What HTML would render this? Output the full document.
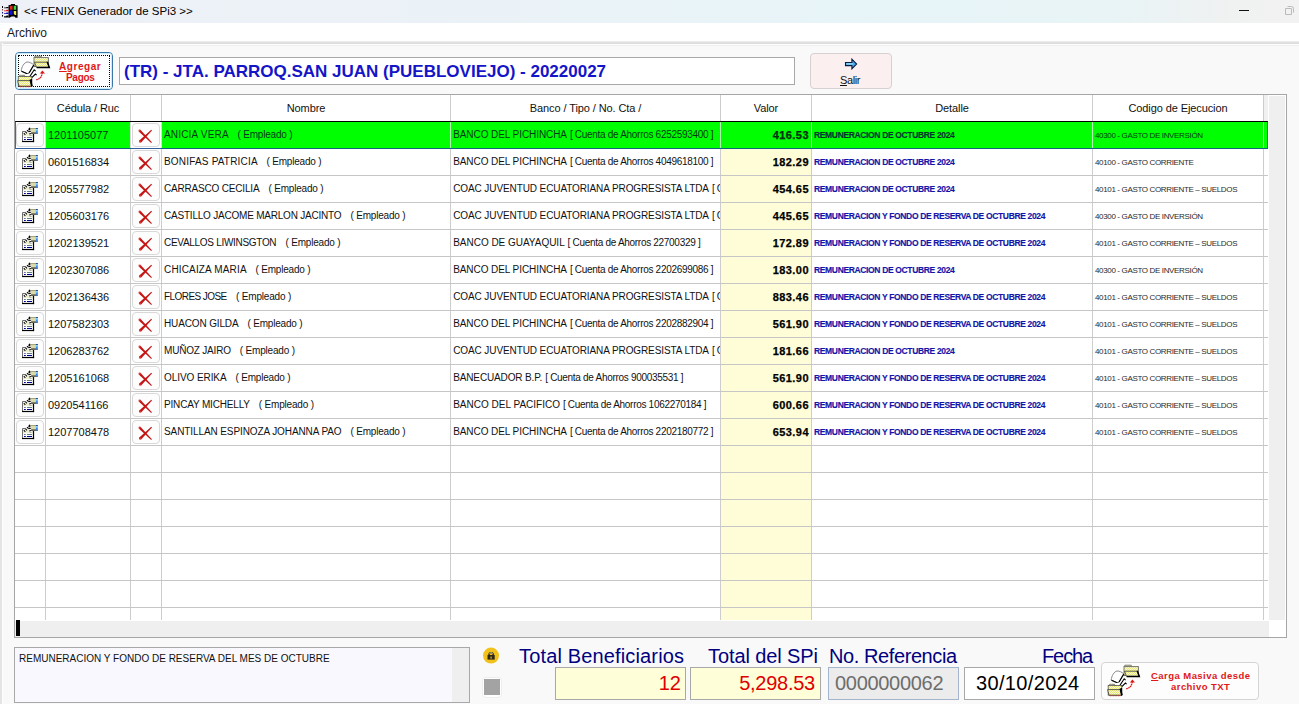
<!DOCTYPE html>
<html><head><meta charset="utf-8">
<style>
*{margin:0;padding:0;box-sizing:border-box}
html,body{width:1299px;height:704px;overflow:hidden;background:#f9f9f9;font-family:"Liberation Sans",sans-serif;color:#000;position:relative}
.a{position:absolute}
.t{white-space:nowrap}
#title{left:0;top:0;width:1299px;height:23px;background:linear-gradient(90deg,#eef1f7 0%,#ebf2f7 35%,#e7f4f8 65%,#e8f4f6 85%,#f0f1f1 95%,#f2f2f2 100%)}
#ttext{left:24px;top:4px;font-size:11.5px;line-height:14px;color:#000}
#menu{left:0;top:23px;width:1299px;height:18px;background:#fff}
#archivo{left:7px;top:26px;font-size:12px;line-height:14px;color:#1a1a1a}
#band{left:0;top:41px;width:1299px;height:3px;background:linear-gradient(180deg,#f0f0f0 0,#e8e8e8 1px,#dcdcdc 2px,#dcdcdc 3px)}
#wl{left:0;top:43px;width:2px;height:661px;background:#e4e4e4;box-shadow:1px 0 0 #fdfdfd}
#wl2{left:2px;top:44px;width:1297px;height:1px;background:#fdfdfd;box-shadow:0 1px 0 #f0f0f0}
#btnAdd{left:15px;top:52px;width:98px;height:38px;border:1.5px solid #3a76ab;border-radius:4px;background:#fcfeff}
#btnAddIn{position:absolute;left:0;top:0;right:0;bottom:0;border:1px solid #c8eefc;border-radius:3px}
#btnAddIn:after{content:"";position:absolute;left:1px;top:1px;right:1px;bottom:1px;border:1px dotted #000}
#addT1{left:59px;top:62px;font-size:10px;font-weight:bold;letter-spacing:0.55px;color:#e01818;line-height:10px}
#addT2{left:66px;top:73px;font-size:10px;font-weight:bold;letter-spacing:-0.3px;color:#e01818;line-height:10px}
#tbox{left:119px;top:57px;width:676px;height:28px;border:1px solid #a8a8a8;background:#fff}
#ttitle{left:124px;top:62px;font-size:17px;font-weight:bold;color:#1414c8;line-height:20px}
#btnSalir{left:810px;top:53px;width:82px;height:36px;border:1px solid #d6d0d0;border-radius:4px;background:#fcefef}
#salirT{left:840px;top:74px;font-size:11px;letter-spacing:-0.4px;line-height:13px;color:#111}
#gframe{left:14px;top:94px;width:1273px;height:544px;border:1px solid #a6a6a6;background:#fff}
#gwhite{left:15px;top:95px;width:1248px;height:525px;background:#fff}
#yel{left:721px;top:149px;width:90px;height:471px;background:#fefdd8}
.hd{top:101px;font-size:11px;letter-spacing:-0.1px;line-height:14px;text-align:center;color:#111}
#hfill{left:1264px;top:95px;width:4px;height:26px;background:#f0f0f0}
#vsb{left:1269px;top:96px;width:16px;height:524px;background:#efefef}
#hsb{left:15px;top:621px;width:1254px;height:16px;background:#efefef}
#hthumb{left:16px;top:620px;width:4px;height:16px;background:#000}
#corner{left:1269px;top:620px;width:17px;height:17px;background:#fff}
.vl{top:95px;width:1px;height:525px;background:#cdcdcd}
.hl{left:15px;width:1253px;height:1px;background:#c6c6c6}
#hdrline{left:15px;top:121px;width:1253px;height:1px;background:#000}
#selrow{left:15px;width:1253px;height:28px;border:1px solid rgba(16,72,150,0.82);border-top:1px solid #000;border-right-color:rgba(0,110,50,0.7)}
.eb{left:16px;width:28px;height:24px;border:1px solid #d8d8d8;border-radius:4px;background:#fdfdfd}
.db{left:132px;width:28px;height:24px;border:1px solid #d8d8d8;border-radius:4px;background:#fdfdfd}
.c1{left:48px;font-size:11px;line-height:13px;color:#111}
.c2{left:164px;font-size:10px;letter-spacing:0.2px;line-height:13px;color:#111}
.emp{font-size:10px;letter-spacing:-0.18px!important}
.c3{font-size:10px;line-height:13px;color:#111}
.c3clip{left:451px;width:269px;height:14px;overflow:hidden}
.c4{left:721px;width:88px;text-align:right;font-size:11px;font-weight:bold;letter-spacing:0.45px;line-height:13px;color:#000;-webkit-text-stroke:0.25px #000}
.c5{left:814px;font-size:8.5px;font-weight:bold;letter-spacing:-0.35px;line-height:11px;color:#1414a8;-webkit-text-stroke:0.15px #1414a8}
.c6{left:1095px;font-size:8px;letter-spacing:-0.35px;line-height:11px;color:#2a2a2a}
#desc{left:14px;top:647px;width:456px;height:56px;border:1px solid #a8a8a8;background:#f8f8fe}
#descsb{left:452px;top:648px;width:17px;height:54px;background:#efefef}
#descT{left:19px;top:652px;font-size:10px;line-height:13px;color:#111}
#chkO{left:482px;top:677px;width:20px;height:21px;border-radius:4px;background:#fff;border:1px solid #eeeeee}
#chk{left:484px;top:679px;width:16px;height:16px;background:#a3a3a3}
.lbl{top:645px;font-size:20px;line-height:23px;color:#000080}
.fy{top:667px;width:131px;height:33px;border:1px solid #a8a8a8;background:#fefed9}
.fv{top:670px;font-size:20px;line-height:26px;color:#000}
.red{color:#e00000}
.fref{left:828px;top:667px;width:131px;height:33px;border:1px solid #a4b4cc;background:#ececec}
.ffe{left:964px;top:667px;width:131px;height:33px;border:1px solid #a8a8a8;background:#fff}
#btnCarga{left:1101px;top:662px;width:158px;height:38px;border:1px solid #d4d4d4;border-radius:4px;background:#fdfdfd}
#cT1{left:1151px;top:671px;font-size:9.5px;font-weight:bold;letter-spacing:0.45px;color:#e01818;line-height:10px}
#cT2{left:1171px;top:682px;font-size:9.5px;font-weight:bold;letter-spacing:0.45px;color:#e01818;line-height:10px}

.br{font-size:10px;letter-spacing:-0.3px}

</style></head><body>

<div class="a" id="title"></div>
<svg class="a" style="left:0;top:2px" width="22" height="18" viewBox="0 0 22 18"><path d="M8.5 3.2L11 2.8V2h4v1L17.6 3.4V15.8H15.5L14.5 14.6H11.5L9.5 15.8H8.5z" fill="#000"/><rect x="9.8" y="3.8" width="2.8" height="3.9" fill="#e02828"/><rect x="13.7" y="3.8" width="2.5" height="4" fill="#30e040"/><rect x="9.6" y="8.5" width="2.9" height="4.3" fill="#1010e0"/><path d="M13.8 9h2.4v4h-1.4l-1-1.5z" fill="#f0f040"/><rect x="2" y="4" width="1" height="2" fill="#000"/><rect x="2" y="7" width="1" height="1.5" fill="#804040"/><rect x="2" y="10" width="1" height="1.5" fill="#101090"/><rect x="2" y="13" width="1" height="1.6" fill="#000"/><path d="M4 5.5H6l0.6-0.6H8.5V6.3H4z" fill="#000"/><path d="M4 8.4H6l0.6-0.6H8.5V9.2H4z" fill="#e01010"/><path d="M4 11.2H6l0.6-0.6H8.5V12H4z" fill="#1010c0"/><path d="M4 14.2H6l0.6-0.6H8.5V15.6H4z" fill="#000"/></svg>

<div class="a t" id="ttext">&lt;&lt; FENIX Generador de SPi3 &gt;&gt;</div>
<div class="a" style="left:1239px;top:10px;width:10px;height:1px;background:#111"></div>
<svg class="a" style="left:1283px;top:4px" width="12" height="12" viewBox="0 0 12 12"><path d="M2.5 4.5h6v6h-6z" fill="none" stroke="#bbb" stroke-width="1"/><path d="M4.5 2.5h4a2 2 0 0 1 2 2v4" fill="none" stroke="#bbb" stroke-width="1"/></svg>
<div class="a" id="menu"></div>
<div class="a t" id="archivo">Archivo</div>
<div class="a" id="band"></div>
<div class="a" id="wl"></div>
<div class="a" id="wl2"></div>
<div class="a" id="btnAdd"><div id="btnAddIn"></div></div>
<svg class="a" style="left:17px;top:55px" width="34" height="34" viewBox="0 0 34 34"><defs><pattern id="chk" width="2" height="2" patternUnits="userSpaceOnUse"><rect width="2" height="2" fill="#e6e67a"/><rect width="1" height="1" fill="#fafad0"/><rect x="1" y="1" width="1" height="1" fill="#fafad0"/></pattern></defs>
<path d="M17.8 3V1.2h6.5V3" fill="#e8e8a0" stroke="#777" stroke-width="0.9"/>
<rect x="17" y="2.6" width="14.4" height="9" fill="url(#chk)" stroke="#6a6a6a" stroke-width="0.9"/>
<path d="M17.5 7.2H30.3L32.1 12.4H19.5z" fill="url(#chk)" stroke="#333" stroke-width="0.8"/>
<path d="M30.3 6.8L32.3 12.6H19.8" fill="none" stroke="#000" stroke-width="1.5"/>
<path d="M4.2 16C4.6 12 7 7.6 10 7C12.5 6.8 14.8 8.3 16.8 9.8L11.3 19.3z" fill="#fff" stroke="#8a8a8a" stroke-width="1"/>
<path d="M4.5 16.2L11.3 19.3L16.8 10" fill="none" stroke="#000" stroke-width="1.2"/>
<path d="M5.4 20.6L11.8 23.1L17.2 14.8L18.6 16.2" fill="#fff" stroke="#000" stroke-width="1.1"/>
<path d="M12.8 24.6L18.4 19L19.6 20.2" fill="none" stroke="#000" stroke-width="1.1"/>
<path d="M2.5 22V20.3h5V22" fill="#e8e8a0" stroke="#777" stroke-width="0.8"/>
<rect x="1.2" y="21.5" width="13.6" height="9.6" fill="url(#chk)" stroke="#555" stroke-width="0.8"/>
<path d="M0.6 25.6H13.2L14.6 31.2H2z" fill="url(#chk)" stroke="#333" stroke-width="0.8"/>
<path d="M13.3 24.5L15 31.3" fill="none" stroke="#000" stroke-width="1.6"/>
<path d="M14.5 24V31.5" fill="none" stroke="#000" stroke-width="1.2"/>
<path d="M3 31.8H14" stroke="#d02020" stroke-width="0.9" stroke-dasharray="0.8 0.8"/>
<path d="M19.2 24.6C22 24.6 24.6 22.5 25.2 18" fill="none" stroke="#e01818" stroke-width="1.3" stroke-dasharray="1.6 0.5"/>
<path d="M22.8 18.6L25.4 15.6L28 18.4z" fill="#e01818"/>
</svg>
<div class="a t" id="addT1"><u>A</u>gregar</div><div class="a t" id="addT2">Pagos</div>
<div class="a" id="tbox"></div>
<div class="a t" id="ttitle">(TR) - JTA. PARROQ.SAN JUAN (PUEBLOVIEJO) - 20220027</div>
<div class="a" id="btnSalir"></div>
<svg class="a" style="left:844px;top:58px" width="14" height="12" viewBox="0 0 14 12"><path d="M1.5 4.5h6.4V1.2L12.6 6 7.9 10.8V7.6H1.5z" fill="#4aa8e8" stroke="#0a1a40" stroke-width="1.1" stroke-linejoin="miter"/><path d="M2.3 5.9h6.5" stroke="#a8ecff" stroke-width="1"/></svg>
<div class="a t" id="salirT"><u>S</u>alir</div>
<div class="a" id="gframe"></div>
<div class="a" id="gwhite"></div>
<div class="a" id="yel"></div>
<div class="a t hd" style="left:46px;width:84px">Cédula / Ruc</div>
<div class="a t hd" style="left:162px;width:288px">Nombre</div>
<div class="a t hd" style="left:451px;width:269px">Banco / Tipo / No. Cta /</div>
<div class="a t hd" style="left:721px;width:90px">Valor</div>
<div class="a t hd" style="left:812px;width:280px">Detalle</div>
<div class="a t hd" style="left:1093px;width:170px">Codigo de Ejecucion</div>
<div class="a" id="hfill"></div>
<div class="a" id="vsb"></div>
<div class="a" id="hsb"></div>
<div class="a" id="hthumb"></div>
<div class="a" id="corner"></div>
<div class="a vl" style="left:45px"></div>
<div class="a vl" style="left:130px"></div>
<div class="a vl" style="left:161px"></div>
<div class="a vl" style="left:450px"></div>
<div class="a vl" style="left:720px"></div>
<div class="a vl" style="left:811px"></div>
<div class="a vl" style="left:1092px"></div>
<div class="a vl" style="left:1263px"></div>
<div class="a hl" style="top:121px"></div>
<div class="a hl" style="top:148px"></div>
<div class="a hl" style="top:175px"></div>
<div class="a hl" style="top:202px"></div>
<div class="a hl" style="top:229px"></div>
<div class="a hl" style="top:256px"></div>
<div class="a hl" style="top:283px"></div>
<div class="a hl" style="top:310px"></div>
<div class="a hl" style="top:337px"></div>
<div class="a hl" style="top:364px"></div>
<div class="a hl" style="top:391px"></div>
<div class="a hl" style="top:418px"></div>
<div class="a hl" style="top:445px"></div>
<div class="a hl" style="top:472px"></div>
<div class="a hl" style="top:499px"></div>
<div class="a hl" style="top:526px"></div>
<div class="a hl" style="top:553px"></div>
<div class="a hl" style="top:580px"></div>
<div class="a hl" style="top:607px"></div>
<div class="a" id="hdrline"></div>
<div class="a" style="left:15px;top:122px;width:1253px;height:26px;background:#fff"></div>
<div class="a" style="left:45px;top:122px;width:86px;height:27px;background:#00ff00"></div>
<div class="a" style="left:161px;top:122px;width:1107px;height:27px;background:#00ff00"></div>
<div class="a" style="left:45px;top:122px;width:1px;height:26px;background:#b4f8b4"></div>
<div class="a" style="left:130px;top:122px;width:1px;height:26px;background:#d8d8d8"></div>
<div class="a" style="left:161px;top:122px;width:1px;height:26px;background:#b4f8b4"></div>
<div class="a" style="left:450px;top:122px;width:1px;height:26px;background:#b4f8b4"></div>
<div class="a" style="left:720px;top:122px;width:1px;height:26px;background:#b4f8b4"></div>
<div class="a" style="left:811px;top:122px;width:1px;height:26px;background:#b4f8b4"></div>
<div class="a" style="left:1092px;top:122px;width:1px;height:26px;background:#b4f8b4"></div>
<div class="a" style="left:1263px;top:122px;width:1px;height:26px;background:#b4f8b4"></div>
<div class="a" id="selrow" style="top:121px"></div>
<div class="a eb" style="top:123px"></div>
<svg class="a" style="left:20px;top:126px" width="18" height="17" viewBox="0 0 18 17"><rect x="2" y="5" width="12" height="11" fill="#fff"/><rect x="2.6" y="5.6" width="10.6" height="4.6" fill="#eeeed0"/><path d="M2.5 15.5V5.5H7" fill="none" stroke="#6e6e6e" stroke-width="1"/><rect x="12.9" y="8" width="1.2" height="8.1" fill="#000"/><rect x="2" y="14.9" width="12.1" height="1.2" fill="#000"/><rect x="4" y="11" width="1.8" height="0.9" fill="#6060a0"/><rect x="7" y="11" width="5" height="0.9" fill="#507070"/><rect x="4" y="13" width="1.8" height="1" fill="#000090"/><rect x="7" y="13" width="5" height="1" fill="#000090"/><rect x="9.5" y="2" width="6.2" height="5" fill="#dcdaa8"/><rect x="9.5" y="2" width="6.2" height="0.8" fill="#9a9870"/><rect x="11" y="6.6" width="6.8" height="1" fill="#000"/><rect x="15.8" y="2" width="2" height="5.4" fill="#3c88e8"/><rect x="15.8" y="2" width="2" height="0.8" fill="#1c3a80"/><rect x="15.8" y="3" width="2" height="1.6" fill="#88d8ff"/><path d="M4.2 8.4L9.3 3.4L10.6 9.4" fill="none" stroke="#fff" stroke-width="2.2"/><path d="M4.2 8.4L9.3 3.4L10.6 9.4" fill="none" stroke="#000" stroke-width="2.2" stroke-dasharray="1.1 1.1"/>
</svg>
<div class="a db" style="top:123px"></div>
<svg class="a" style="left:138px;top:129px" width="15" height="14" viewBox="0 0 15 14"><path d="M0.7 2.6L2.4 0.8L13.9 13.2L13.2 14z" fill="#c41414"/><path d="M14 1.4L13.3 0.7L1 11.8L2.9 13.8z" fill="#c41414"/><circle cx="2" cy="12.6" r="1.1" fill="#e03030"/><circle cx="1.6" cy="1.7" r="1.1" fill="#e03a3a"/></svg>
<div class="a t c1" style="top:129px;color:#003a18">1201105077</div>
<div class="a t c2" style="top:128px;letter-spacing:0.179px;color:#003a18">ANICIA VERA</div>
<div class="a t c2 emp" style="top:128px;left:237.4px;color:#003a18">( Empleado )</div>
<div class="a c3clip" style="top:128px"><div class="a t c3" style="left:2.2px;top:0;letter-spacing:-0.078px;color:#003a18">BANCO DEL PICHINCHA</div><div class="a t c3 br" style="left:118.9px;top:0;color:#003a18">[ Cuenta de Ahorros 6252593400 ]</div></div>
<div class="a t c4" style="top:129px;color:#003a18">416.53</div>
<div class="a t c5" style="top:130px;color:#003a18">REMUNERACION DE OCTUBRE 2024</div>
<div class="a t c6" style="top:130px;color:#003a18">40300 - GASTO DE INVERSIÓN</div>
<div class="a eb" style="top:150px"></div>
<svg class="a" style="left:20px;top:153px" width="18" height="17" viewBox="0 0 18 17"><rect x="2" y="5" width="12" height="11" fill="#fff"/><rect x="2.6" y="5.6" width="10.6" height="4.6" fill="#eeeed0"/><path d="M2.5 15.5V5.5H7" fill="none" stroke="#6e6e6e" stroke-width="1"/><rect x="12.9" y="8" width="1.2" height="8.1" fill="#000"/><rect x="2" y="14.9" width="12.1" height="1.2" fill="#000"/><rect x="4" y="11" width="1.8" height="0.9" fill="#6060a0"/><rect x="7" y="11" width="5" height="0.9" fill="#507070"/><rect x="4" y="13" width="1.8" height="1" fill="#000090"/><rect x="7" y="13" width="5" height="1" fill="#000090"/><rect x="9.5" y="2" width="6.2" height="5" fill="#dcdaa8"/><rect x="9.5" y="2" width="6.2" height="0.8" fill="#9a9870"/><rect x="11" y="6.6" width="6.8" height="1" fill="#000"/><rect x="15.8" y="2" width="2" height="5.4" fill="#3c88e8"/><rect x="15.8" y="2" width="2" height="0.8" fill="#1c3a80"/><rect x="15.8" y="3" width="2" height="1.6" fill="#88d8ff"/><path d="M4.2 8.4L9.3 3.4L10.6 9.4" fill="none" stroke="#fff" stroke-width="2.2"/><path d="M4.2 8.4L9.3 3.4L10.6 9.4" fill="none" stroke="#000" stroke-width="2.2" stroke-dasharray="1.1 1.1"/>
</svg>
<div class="a db" style="top:150px"></div>
<svg class="a" style="left:138px;top:156px" width="15" height="14" viewBox="0 0 15 14"><path d="M0.7 2.6L2.4 0.8L13.9 13.2L13.2 14z" fill="#c41414"/><path d="M14 1.4L13.3 0.7L1 11.8L2.9 13.8z" fill="#c41414"/><circle cx="2" cy="12.6" r="1.1" fill="#e03030"/><circle cx="1.6" cy="1.7" r="1.1" fill="#e03a3a"/></svg>
<div class="a t c1" style="top:156px">0601516834</div>
<div class="a t c2" style="top:155px;letter-spacing:0.189px">BONIFAS PATRICIA</div>
<div class="a t c2 emp" style="top:155px;left:266.4px">( Empleado )</div>
<div class="a c3clip" style="top:155px"><div class="a t c3" style="left:2.2px;top:0;letter-spacing:-0.078px">BANCO DEL PICHINCHA</div><div class="a t c3 br" style="left:118.9px;top:0">[ Cuenta de Ahorros 4049618100 ]</div></div>
<div class="a t c4" style="top:156px">182.29</div>
<div class="a t c5" style="top:157px">REMUNERACION DE OCTUBRE 2024</div>
<div class="a t c6" style="top:157px">40100 - GASTO CORRIENTE</div>
<div class="a eb" style="top:177px"></div>
<svg class="a" style="left:20px;top:180px" width="18" height="17" viewBox="0 0 18 17"><rect x="2" y="5" width="12" height="11" fill="#fff"/><rect x="2.6" y="5.6" width="10.6" height="4.6" fill="#eeeed0"/><path d="M2.5 15.5V5.5H7" fill="none" stroke="#6e6e6e" stroke-width="1"/><rect x="12.9" y="8" width="1.2" height="8.1" fill="#000"/><rect x="2" y="14.9" width="12.1" height="1.2" fill="#000"/><rect x="4" y="11" width="1.8" height="0.9" fill="#6060a0"/><rect x="7" y="11" width="5" height="0.9" fill="#507070"/><rect x="4" y="13" width="1.8" height="1" fill="#000090"/><rect x="7" y="13" width="5" height="1" fill="#000090"/><rect x="9.5" y="2" width="6.2" height="5" fill="#dcdaa8"/><rect x="9.5" y="2" width="6.2" height="0.8" fill="#9a9870"/><rect x="11" y="6.6" width="6.8" height="1" fill="#000"/><rect x="15.8" y="2" width="2" height="5.4" fill="#3c88e8"/><rect x="15.8" y="2" width="2" height="0.8" fill="#1c3a80"/><rect x="15.8" y="3" width="2" height="1.6" fill="#88d8ff"/><path d="M4.2 8.4L9.3 3.4L10.6 9.4" fill="none" stroke="#fff" stroke-width="2.2"/><path d="M4.2 8.4L9.3 3.4L10.6 9.4" fill="none" stroke="#000" stroke-width="2.2" stroke-dasharray="1.1 1.1"/>
</svg>
<div class="a db" style="top:177px"></div>
<svg class="a" style="left:138px;top:183px" width="15" height="14" viewBox="0 0 15 14"><path d="M0.7 2.6L2.4 0.8L13.9 13.2L13.2 14z" fill="#c41414"/><path d="M14 1.4L13.3 0.7L1 11.8L2.9 13.8z" fill="#c41414"/><circle cx="2" cy="12.6" r="1.1" fill="#e03030"/><circle cx="1.6" cy="1.7" r="1.1" fill="#e03a3a"/></svg>
<div class="a t c1" style="top:183px">1205577982</div>
<div class="a t c2" style="top:182px;letter-spacing:-0.184px">CARRASCO CECILIA</div>
<div class="a t c2 emp" style="top:182px;left:268.4px">( Empleado )</div>
<div class="a c3clip" style="top:182px"><div class="a t c3" style="left:2.2px;top:0;letter-spacing:-0.099px">COAC JUVENTUD ECUATORIANA PROGRESISTA LTDA</div><div class="a t c3 br" style="left:260.9px;top:0">[ Cuenta de Ahorros</div></div>
<div class="a t c4" style="top:183px">454.65</div>
<div class="a t c5" style="top:184px">REMUNERACION DE OCTUBRE 2024</div>
<div class="a t c6" style="top:184px">40101 - GASTO CORRIENTE – SUELDOS</div>
<div class="a eb" style="top:204px"></div>
<svg class="a" style="left:20px;top:207px" width="18" height="17" viewBox="0 0 18 17"><rect x="2" y="5" width="12" height="11" fill="#fff"/><rect x="2.6" y="5.6" width="10.6" height="4.6" fill="#eeeed0"/><path d="M2.5 15.5V5.5H7" fill="none" stroke="#6e6e6e" stroke-width="1"/><rect x="12.9" y="8" width="1.2" height="8.1" fill="#000"/><rect x="2" y="14.9" width="12.1" height="1.2" fill="#000"/><rect x="4" y="11" width="1.8" height="0.9" fill="#6060a0"/><rect x="7" y="11" width="5" height="0.9" fill="#507070"/><rect x="4" y="13" width="1.8" height="1" fill="#000090"/><rect x="7" y="13" width="5" height="1" fill="#000090"/><rect x="9.5" y="2" width="6.2" height="5" fill="#dcdaa8"/><rect x="9.5" y="2" width="6.2" height="0.8" fill="#9a9870"/><rect x="11" y="6.6" width="6.8" height="1" fill="#000"/><rect x="15.8" y="2" width="2" height="5.4" fill="#3c88e8"/><rect x="15.8" y="2" width="2" height="0.8" fill="#1c3a80"/><rect x="15.8" y="3" width="2" height="1.6" fill="#88d8ff"/><path d="M4.2 8.4L9.3 3.4L10.6 9.4" fill="none" stroke="#fff" stroke-width="2.2"/><path d="M4.2 8.4L9.3 3.4L10.6 9.4" fill="none" stroke="#000" stroke-width="2.2" stroke-dasharray="1.1 1.1"/>
</svg>
<div class="a db" style="top:204px"></div>
<svg class="a" style="left:138px;top:210px" width="15" height="14" viewBox="0 0 15 14"><path d="M0.7 2.6L2.4 0.8L13.9 13.2L13.2 14z" fill="#c41414"/><path d="M14 1.4L13.3 0.7L1 11.8L2.9 13.8z" fill="#c41414"/><circle cx="2" cy="12.6" r="1.1" fill="#e03030"/><circle cx="1.6" cy="1.7" r="1.1" fill="#e03a3a"/></svg>
<div class="a t c1" style="top:210px">1205603176</div>
<div class="a t c2" style="top:209px;letter-spacing:-0.212px">CASTILLO JACOME MARLON JACINTO</div>
<div class="a t c2 emp" style="top:209px;left:350.4px">( Empleado )</div>
<div class="a c3clip" style="top:209px"><div class="a t c3" style="left:2.2px;top:0;letter-spacing:-0.099px">COAC JUVENTUD ECUATORIANA PROGRESISTA LTDA</div><div class="a t c3 br" style="left:260.9px;top:0">[ Cuenta de Ahorros</div></div>
<div class="a t c4" style="top:210px">445.65</div>
<div class="a t c5" style="top:211px">REMUNERACION Y FONDO DE RESERVA DE OCTUBRE 2024</div>
<div class="a t c6" style="top:211px">40300 - GASTO DE INVERSIÓN</div>
<div class="a eb" style="top:231px"></div>
<svg class="a" style="left:20px;top:234px" width="18" height="17" viewBox="0 0 18 17"><rect x="2" y="5" width="12" height="11" fill="#fff"/><rect x="2.6" y="5.6" width="10.6" height="4.6" fill="#eeeed0"/><path d="M2.5 15.5V5.5H7" fill="none" stroke="#6e6e6e" stroke-width="1"/><rect x="12.9" y="8" width="1.2" height="8.1" fill="#000"/><rect x="2" y="14.9" width="12.1" height="1.2" fill="#000"/><rect x="4" y="11" width="1.8" height="0.9" fill="#6060a0"/><rect x="7" y="11" width="5" height="0.9" fill="#507070"/><rect x="4" y="13" width="1.8" height="1" fill="#000090"/><rect x="7" y="13" width="5" height="1" fill="#000090"/><rect x="9.5" y="2" width="6.2" height="5" fill="#dcdaa8"/><rect x="9.5" y="2" width="6.2" height="0.8" fill="#9a9870"/><rect x="11" y="6.6" width="6.8" height="1" fill="#000"/><rect x="15.8" y="2" width="2" height="5.4" fill="#3c88e8"/><rect x="15.8" y="2" width="2" height="0.8" fill="#1c3a80"/><rect x="15.8" y="3" width="2" height="1.6" fill="#88d8ff"/><path d="M4.2 8.4L9.3 3.4L10.6 9.4" fill="none" stroke="#fff" stroke-width="2.2"/><path d="M4.2 8.4L9.3 3.4L10.6 9.4" fill="none" stroke="#000" stroke-width="2.2" stroke-dasharray="1.1 1.1"/>
</svg>
<div class="a db" style="top:231px"></div>
<svg class="a" style="left:138px;top:237px" width="15" height="14" viewBox="0 0 15 14"><path d="M0.7 2.6L2.4 0.8L13.9 13.2L13.2 14z" fill="#c41414"/><path d="M14 1.4L13.3 0.7L1 11.8L2.9 13.8z" fill="#c41414"/><circle cx="2" cy="12.6" r="1.1" fill="#e03030"/><circle cx="1.6" cy="1.7" r="1.1" fill="#e03a3a"/></svg>
<div class="a t c1" style="top:237px">1202139521</div>
<div class="a t c2" style="top:236px;letter-spacing:-0.3px">CEVALLOS LIWINSGTON</div>
<div class="a t c2 emp" style="top:236px;left:285.4px">( Empleado )</div>
<div class="a c3clip" style="top:236px"><div class="a t c3" style="left:2.2px;top:0;letter-spacing:-0.022px">BANCO DE GUAYAQUIL</div><div class="a t c3 br" style="left:116.6px;top:0">[ Cuenta de Ahorros 22700329 ]</div></div>
<div class="a t c4" style="top:237px">172.89</div>
<div class="a t c5" style="top:238px">REMUNERACION Y FONDO DE RESERVA DE OCTUBRE 2024</div>
<div class="a t c6" style="top:238px">40101 - GASTO CORRIENTE – SUELDOS</div>
<div class="a eb" style="top:258px"></div>
<svg class="a" style="left:20px;top:261px" width="18" height="17" viewBox="0 0 18 17"><rect x="2" y="5" width="12" height="11" fill="#fff"/><rect x="2.6" y="5.6" width="10.6" height="4.6" fill="#eeeed0"/><path d="M2.5 15.5V5.5H7" fill="none" stroke="#6e6e6e" stroke-width="1"/><rect x="12.9" y="8" width="1.2" height="8.1" fill="#000"/><rect x="2" y="14.9" width="12.1" height="1.2" fill="#000"/><rect x="4" y="11" width="1.8" height="0.9" fill="#6060a0"/><rect x="7" y="11" width="5" height="0.9" fill="#507070"/><rect x="4" y="13" width="1.8" height="1" fill="#000090"/><rect x="7" y="13" width="5" height="1" fill="#000090"/><rect x="9.5" y="2" width="6.2" height="5" fill="#dcdaa8"/><rect x="9.5" y="2" width="6.2" height="0.8" fill="#9a9870"/><rect x="11" y="6.6" width="6.8" height="1" fill="#000"/><rect x="15.8" y="2" width="2" height="5.4" fill="#3c88e8"/><rect x="15.8" y="2" width="2" height="0.8" fill="#1c3a80"/><rect x="15.8" y="3" width="2" height="1.6" fill="#88d8ff"/><path d="M4.2 8.4L9.3 3.4L10.6 9.4" fill="none" stroke="#fff" stroke-width="2.2"/><path d="M4.2 8.4L9.3 3.4L10.6 9.4" fill="none" stroke="#000" stroke-width="2.2" stroke-dasharray="1.1 1.1"/>
</svg>
<div class="a db" style="top:258px"></div>
<svg class="a" style="left:138px;top:264px" width="15" height="14" viewBox="0 0 15 14"><path d="M0.7 2.6L2.4 0.8L13.9 13.2L13.2 14z" fill="#c41414"/><path d="M14 1.4L13.3 0.7L1 11.8L2.9 13.8z" fill="#c41414"/><circle cx="2" cy="12.6" r="1.1" fill="#e03030"/><circle cx="1.6" cy="1.7" r="1.1" fill="#e03a3a"/></svg>
<div class="a t c1" style="top:264px">1202307086</div>
<div class="a t c2" style="top:263px;letter-spacing:0.155px">CHICAIZA MARIA</div>
<div class="a t c2 emp" style="top:263px;left:255.4px">( Empleado )</div>
<div class="a c3clip" style="top:263px"><div class="a t c3" style="left:2.2px;top:0;letter-spacing:-0.078px">BANCO DEL PICHINCHA</div><div class="a t c3 br" style="left:118.9px;top:0">[ Cuenta de Ahorros 2202699086 ]</div></div>
<div class="a t c4" style="top:264px">183.00</div>
<div class="a t c5" style="top:265px">REMUNERACION DE OCTUBRE 2024</div>
<div class="a t c6" style="top:265px">40300 - GASTO DE INVERSIÓN</div>
<div class="a eb" style="top:285px"></div>
<svg class="a" style="left:20px;top:288px" width="18" height="17" viewBox="0 0 18 17"><rect x="2" y="5" width="12" height="11" fill="#fff"/><rect x="2.6" y="5.6" width="10.6" height="4.6" fill="#eeeed0"/><path d="M2.5 15.5V5.5H7" fill="none" stroke="#6e6e6e" stroke-width="1"/><rect x="12.9" y="8" width="1.2" height="8.1" fill="#000"/><rect x="2" y="14.9" width="12.1" height="1.2" fill="#000"/><rect x="4" y="11" width="1.8" height="0.9" fill="#6060a0"/><rect x="7" y="11" width="5" height="0.9" fill="#507070"/><rect x="4" y="13" width="1.8" height="1" fill="#000090"/><rect x="7" y="13" width="5" height="1" fill="#000090"/><rect x="9.5" y="2" width="6.2" height="5" fill="#dcdaa8"/><rect x="9.5" y="2" width="6.2" height="0.8" fill="#9a9870"/><rect x="11" y="6.6" width="6.8" height="1" fill="#000"/><rect x="15.8" y="2" width="2" height="5.4" fill="#3c88e8"/><rect x="15.8" y="2" width="2" height="0.8" fill="#1c3a80"/><rect x="15.8" y="3" width="2" height="1.6" fill="#88d8ff"/><path d="M4.2 8.4L9.3 3.4L10.6 9.4" fill="none" stroke="#fff" stroke-width="2.2"/><path d="M4.2 8.4L9.3 3.4L10.6 9.4" fill="none" stroke="#000" stroke-width="2.2" stroke-dasharray="1.1 1.1"/>
</svg>
<div class="a db" style="top:285px"></div>
<svg class="a" style="left:138px;top:291px" width="15" height="14" viewBox="0 0 15 14"><path d="M0.7 2.6L2.4 0.8L13.9 13.2L13.2 14z" fill="#c41414"/><path d="M14 1.4L13.3 0.7L1 11.8L2.9 13.8z" fill="#c41414"/><circle cx="2" cy="12.6" r="1.1" fill="#e03030"/><circle cx="1.6" cy="1.7" r="1.1" fill="#e03a3a"/></svg>
<div class="a t c1" style="top:291px">1202136436</div>
<div class="a t c2" style="top:290px;letter-spacing:-0.571px">FLORES JOSE</div>
<div class="a t c2 emp" style="top:290px;left:236.0px">( Empleado )</div>
<div class="a c3clip" style="top:290px"><div class="a t c3" style="left:2.2px;top:0;letter-spacing:-0.099px">COAC JUVENTUD ECUATORIANA PROGRESISTA LTDA</div><div class="a t c3 br" style="left:260.9px;top:0">[ Cuenta de Ahorros</div></div>
<div class="a t c4" style="top:291px">883.46</div>
<div class="a t c5" style="top:292px">REMUNERACION Y FONDO DE RESERVA DE OCTUBRE 2024</div>
<div class="a t c6" style="top:292px">40101 - GASTO CORRIENTE – SUELDOS</div>
<div class="a eb" style="top:312px"></div>
<svg class="a" style="left:20px;top:315px" width="18" height="17" viewBox="0 0 18 17"><rect x="2" y="5" width="12" height="11" fill="#fff"/><rect x="2.6" y="5.6" width="10.6" height="4.6" fill="#eeeed0"/><path d="M2.5 15.5V5.5H7" fill="none" stroke="#6e6e6e" stroke-width="1"/><rect x="12.9" y="8" width="1.2" height="8.1" fill="#000"/><rect x="2" y="14.9" width="12.1" height="1.2" fill="#000"/><rect x="4" y="11" width="1.8" height="0.9" fill="#6060a0"/><rect x="7" y="11" width="5" height="0.9" fill="#507070"/><rect x="4" y="13" width="1.8" height="1" fill="#000090"/><rect x="7" y="13" width="5" height="1" fill="#000090"/><rect x="9.5" y="2" width="6.2" height="5" fill="#dcdaa8"/><rect x="9.5" y="2" width="6.2" height="0.8" fill="#9a9870"/><rect x="11" y="6.6" width="6.8" height="1" fill="#000"/><rect x="15.8" y="2" width="2" height="5.4" fill="#3c88e8"/><rect x="15.8" y="2" width="2" height="0.8" fill="#1c3a80"/><rect x="15.8" y="3" width="2" height="1.6" fill="#88d8ff"/><path d="M4.2 8.4L9.3 3.4L10.6 9.4" fill="none" stroke="#fff" stroke-width="2.2"/><path d="M4.2 8.4L9.3 3.4L10.6 9.4" fill="none" stroke="#000" stroke-width="2.2" stroke-dasharray="1.1 1.1"/>
</svg>
<div class="a db" style="top:312px"></div>
<svg class="a" style="left:138px;top:318px" width="15" height="14" viewBox="0 0 15 14"><path d="M0.7 2.6L2.4 0.8L13.9 13.2L13.2 14z" fill="#c41414"/><path d="M14 1.4L13.3 0.7L1 11.8L2.9 13.8z" fill="#c41414"/><circle cx="2" cy="12.6" r="1.1" fill="#e03030"/><circle cx="1.6" cy="1.7" r="1.1" fill="#e03a3a"/></svg>
<div class="a t c1" style="top:318px">1207582303</div>
<div class="a t c2" style="top:317px;letter-spacing:-0.138px">HUACON GILDA</div>
<div class="a t c2 emp" style="top:317px;left:247.4px">( Empleado )</div>
<div class="a c3clip" style="top:317px"><div class="a t c3" style="left:2.2px;top:0;letter-spacing:-0.078px">BANCO DEL PICHINCHA</div><div class="a t c3 br" style="left:118.9px;top:0">[ Cuenta de Ahorros 2202882904 ]</div></div>
<div class="a t c4" style="top:318px">561.90</div>
<div class="a t c5" style="top:319px">REMUNERACION Y FONDO DE RESERVA DE OCTUBRE 2024</div>
<div class="a t c6" style="top:319px">40101 - GASTO CORRIENTE – SUELDOS</div>
<div class="a eb" style="top:339px"></div>
<svg class="a" style="left:20px;top:342px" width="18" height="17" viewBox="0 0 18 17"><rect x="2" y="5" width="12" height="11" fill="#fff"/><rect x="2.6" y="5.6" width="10.6" height="4.6" fill="#eeeed0"/><path d="M2.5 15.5V5.5H7" fill="none" stroke="#6e6e6e" stroke-width="1"/><rect x="12.9" y="8" width="1.2" height="8.1" fill="#000"/><rect x="2" y="14.9" width="12.1" height="1.2" fill="#000"/><rect x="4" y="11" width="1.8" height="0.9" fill="#6060a0"/><rect x="7" y="11" width="5" height="0.9" fill="#507070"/><rect x="4" y="13" width="1.8" height="1" fill="#000090"/><rect x="7" y="13" width="5" height="1" fill="#000090"/><rect x="9.5" y="2" width="6.2" height="5" fill="#dcdaa8"/><rect x="9.5" y="2" width="6.2" height="0.8" fill="#9a9870"/><rect x="11" y="6.6" width="6.8" height="1" fill="#000"/><rect x="15.8" y="2" width="2" height="5.4" fill="#3c88e8"/><rect x="15.8" y="2" width="2" height="0.8" fill="#1c3a80"/><rect x="15.8" y="3" width="2" height="1.6" fill="#88d8ff"/><path d="M4.2 8.4L9.3 3.4L10.6 9.4" fill="none" stroke="#fff" stroke-width="2.2"/><path d="M4.2 8.4L9.3 3.4L10.6 9.4" fill="none" stroke="#000" stroke-width="2.2" stroke-dasharray="1.1 1.1"/>
</svg>
<div class="a db" style="top:339px"></div>
<svg class="a" style="left:138px;top:345px" width="15" height="14" viewBox="0 0 15 14"><path d="M0.7 2.6L2.4 0.8L13.9 13.2L13.2 14z" fill="#c41414"/><path d="M14 1.4L13.3 0.7L1 11.8L2.9 13.8z" fill="#c41414"/><circle cx="2" cy="12.6" r="1.1" fill="#e03030"/><circle cx="1.6" cy="1.7" r="1.1" fill="#e03a3a"/></svg>
<div class="a t c1" style="top:345px">1206283762</div>
<div class="a t c2" style="top:344px;letter-spacing:-0.189px">MUÑOZ JAIRO</div>
<div class="a t c2 emp" style="top:344px;left:239.8px">( Empleado )</div>
<div class="a c3clip" style="top:344px"><div class="a t c3" style="left:2.2px;top:0;letter-spacing:-0.099px">COAC JUVENTUD ECUATORIANA PROGRESISTA LTDA</div><div class="a t c3 br" style="left:260.9px;top:0">[ Cuenta de Ahorros</div></div>
<div class="a t c4" style="top:345px">181.66</div>
<div class="a t c5" style="top:346px">REMUNERACION DE OCTUBRE 2024</div>
<div class="a t c6" style="top:346px">40101 - GASTO CORRIENTE – SUELDOS</div>
<div class="a eb" style="top:366px"></div>
<svg class="a" style="left:20px;top:369px" width="18" height="17" viewBox="0 0 18 17"><rect x="2" y="5" width="12" height="11" fill="#fff"/><rect x="2.6" y="5.6" width="10.6" height="4.6" fill="#eeeed0"/><path d="M2.5 15.5V5.5H7" fill="none" stroke="#6e6e6e" stroke-width="1"/><rect x="12.9" y="8" width="1.2" height="8.1" fill="#000"/><rect x="2" y="14.9" width="12.1" height="1.2" fill="#000"/><rect x="4" y="11" width="1.8" height="0.9" fill="#6060a0"/><rect x="7" y="11" width="5" height="0.9" fill="#507070"/><rect x="4" y="13" width="1.8" height="1" fill="#000090"/><rect x="7" y="13" width="5" height="1" fill="#000090"/><rect x="9.5" y="2" width="6.2" height="5" fill="#dcdaa8"/><rect x="9.5" y="2" width="6.2" height="0.8" fill="#9a9870"/><rect x="11" y="6.6" width="6.8" height="1" fill="#000"/><rect x="15.8" y="2" width="2" height="5.4" fill="#3c88e8"/><rect x="15.8" y="2" width="2" height="0.8" fill="#1c3a80"/><rect x="15.8" y="3" width="2" height="1.6" fill="#88d8ff"/><path d="M4.2 8.4L9.3 3.4L10.6 9.4" fill="none" stroke="#fff" stroke-width="2.2"/><path d="M4.2 8.4L9.3 3.4L10.6 9.4" fill="none" stroke="#000" stroke-width="2.2" stroke-dasharray="1.1 1.1"/>
</svg>
<div class="a db" style="top:366px"></div>
<svg class="a" style="left:138px;top:372px" width="15" height="14" viewBox="0 0 15 14"><path d="M0.7 2.6L2.4 0.8L13.9 13.2L13.2 14z" fill="#c41414"/><path d="M14 1.4L13.3 0.7L1 11.8L2.9 13.8z" fill="#c41414"/><circle cx="2" cy="12.6" r="1.1" fill="#e03030"/><circle cx="1.6" cy="1.7" r="1.1" fill="#e03a3a"/></svg>
<div class="a t c1" style="top:372px">1205161068</div>
<div class="a t c2" style="top:371px;letter-spacing:-0.076px">OLIVO ERIKA</div>
<div class="a t c2 emp" style="top:371px;left:235.4px">( Empleado )</div>
<div class="a c3clip" style="top:371px"><div class="a t c3" style="left:2.2px;top:0;letter-spacing:-0.132px">BANECUADOR B.P.</div><div class="a t c3 br" style="left:94.2px;top:0">[ Cuenta de Ahorros 900035531 ]</div></div>
<div class="a t c4" style="top:372px">561.90</div>
<div class="a t c5" style="top:373px">REMUNERACION Y FONDO DE RESERVA DE OCTUBRE 2024</div>
<div class="a t c6" style="top:373px">40101 - GASTO CORRIENTE – SUELDOS</div>
<div class="a eb" style="top:393px"></div>
<svg class="a" style="left:20px;top:396px" width="18" height="17" viewBox="0 0 18 17"><rect x="2" y="5" width="12" height="11" fill="#fff"/><rect x="2.6" y="5.6" width="10.6" height="4.6" fill="#eeeed0"/><path d="M2.5 15.5V5.5H7" fill="none" stroke="#6e6e6e" stroke-width="1"/><rect x="12.9" y="8" width="1.2" height="8.1" fill="#000"/><rect x="2" y="14.9" width="12.1" height="1.2" fill="#000"/><rect x="4" y="11" width="1.8" height="0.9" fill="#6060a0"/><rect x="7" y="11" width="5" height="0.9" fill="#507070"/><rect x="4" y="13" width="1.8" height="1" fill="#000090"/><rect x="7" y="13" width="5" height="1" fill="#000090"/><rect x="9.5" y="2" width="6.2" height="5" fill="#dcdaa8"/><rect x="9.5" y="2" width="6.2" height="0.8" fill="#9a9870"/><rect x="11" y="6.6" width="6.8" height="1" fill="#000"/><rect x="15.8" y="2" width="2" height="5.4" fill="#3c88e8"/><rect x="15.8" y="2" width="2" height="0.8" fill="#1c3a80"/><rect x="15.8" y="3" width="2" height="1.6" fill="#88d8ff"/><path d="M4.2 8.4L9.3 3.4L10.6 9.4" fill="none" stroke="#fff" stroke-width="2.2"/><path d="M4.2 8.4L9.3 3.4L10.6 9.4" fill="none" stroke="#000" stroke-width="2.2" stroke-dasharray="1.1 1.1"/>
</svg>
<div class="a db" style="top:393px"></div>
<svg class="a" style="left:138px;top:399px" width="15" height="14" viewBox="0 0 15 14"><path d="M0.7 2.6L2.4 0.8L13.9 13.2L13.2 14z" fill="#c41414"/><path d="M14 1.4L13.3 0.7L1 11.8L2.9 13.8z" fill="#c41414"/><circle cx="2" cy="12.6" r="1.1" fill="#e03030"/><circle cx="1.6" cy="1.7" r="1.1" fill="#e03a3a"/></svg>
<div class="a t c1" style="top:399px">0920541166</div>
<div class="a t c2" style="top:398px;letter-spacing:-0.169px">PINCAY MICHELLY</div>
<div class="a t c2 emp" style="top:398px;left:258.8px">( Empleado )</div>
<div class="a c3clip" style="top:398px"><div class="a t c3" style="left:2.2px;top:0;letter-spacing:0.006px">BANCO DEL PACIFICO</div><div class="a t c3 br" style="left:111.9px;top:0">[ Cuenta de Ahorros 1062270184 ]</div></div>
<div class="a t c4" style="top:399px">600.66</div>
<div class="a t c5" style="top:400px">REMUNERACION Y FONDO DE RESERVA DE OCTUBRE 2024</div>
<div class="a t c6" style="top:400px">40101 - GASTO CORRIENTE – SUELDOS</div>
<div class="a eb" style="top:420px"></div>
<svg class="a" style="left:20px;top:423px" width="18" height="17" viewBox="0 0 18 17"><rect x="2" y="5" width="12" height="11" fill="#fff"/><rect x="2.6" y="5.6" width="10.6" height="4.6" fill="#eeeed0"/><path d="M2.5 15.5V5.5H7" fill="none" stroke="#6e6e6e" stroke-width="1"/><rect x="12.9" y="8" width="1.2" height="8.1" fill="#000"/><rect x="2" y="14.9" width="12.1" height="1.2" fill="#000"/><rect x="4" y="11" width="1.8" height="0.9" fill="#6060a0"/><rect x="7" y="11" width="5" height="0.9" fill="#507070"/><rect x="4" y="13" width="1.8" height="1" fill="#000090"/><rect x="7" y="13" width="5" height="1" fill="#000090"/><rect x="9.5" y="2" width="6.2" height="5" fill="#dcdaa8"/><rect x="9.5" y="2" width="6.2" height="0.8" fill="#9a9870"/><rect x="11" y="6.6" width="6.8" height="1" fill="#000"/><rect x="15.8" y="2" width="2" height="5.4" fill="#3c88e8"/><rect x="15.8" y="2" width="2" height="0.8" fill="#1c3a80"/><rect x="15.8" y="3" width="2" height="1.6" fill="#88d8ff"/><path d="M4.2 8.4L9.3 3.4L10.6 9.4" fill="none" stroke="#fff" stroke-width="2.2"/><path d="M4.2 8.4L9.3 3.4L10.6 9.4" fill="none" stroke="#000" stroke-width="2.2" stroke-dasharray="1.1 1.1"/>
</svg>
<div class="a db" style="top:420px"></div>
<svg class="a" style="left:138px;top:426px" width="15" height="14" viewBox="0 0 15 14"><path d="M0.7 2.6L2.4 0.8L13.9 13.2L13.2 14z" fill="#c41414"/><path d="M14 1.4L13.3 0.7L1 11.8L2.9 13.8z" fill="#c41414"/><circle cx="2" cy="12.6" r="1.1" fill="#e03030"/><circle cx="1.6" cy="1.7" r="1.1" fill="#e03a3a"/></svg>
<div class="a t c1" style="top:426px">1207708478</div>
<div class="a t c2" style="top:425px;letter-spacing:-0.097px">SANTILLAN ESPINOZA JOHANNA PAO</div>
<div class="a t c2 emp" style="top:425px;left:350.4px">( Empleado )</div>
<div class="a c3clip" style="top:425px"><div class="a t c3" style="left:2.2px;top:0;letter-spacing:-0.078px">BANCO DEL PICHINCHA</div><div class="a t c3 br" style="left:118.9px;top:0">[ Cuenta de Ahorros 2202180772 ]</div></div>
<div class="a t c4" style="top:426px">653.94</div>
<div class="a t c5" style="top:427px">REMUNERACION Y FONDO DE RESERVA DE OCTUBRE 2024</div>
<div class="a t c6" style="top:427px">40101 - GASTO CORRIENTE – SUELDOS</div>
<div class="a" id="desc"></div><div class="a" id="descsb"></div>
<div class="a t" id="descT">REMUNERACION Y FONDO DE RESERVA DEL MES DE OCTUBRE</div>
<svg class="a" style="left:482px;top:647px" width="18" height="18" viewBox="0 0 18 18"><circle cx="9" cy="8.6" r="8" fill="#f2c21c"/><rect x="5.5" y="8" width="7.2" height="4.6" fill="#2e2818"/><path d="M7 8.4V7.9a2.1 2.1 0 0 1 4.2 0V8.4" fill="none" stroke="#2e2818" stroke-width="1.4"/><path d="M7.6 6.8a1.6 1.6 0 0 1 3 0" fill="none" stroke="#e8e0c0" stroke-width="0.8"/><rect x="8.4" y="9.6" width="1.4" height="2" fill="#c8a840"/></svg>
<div class="a" id="chkO"></div><div class="a" id="chk"></div>
<div class="a t lbl" style="left:519px;letter-spacing:0.15px">Total Beneficiarios</div>
<div class="a t lbl" style="left:708px;letter-spacing:-0.1px">Total del SPi</div>
<div class="a t lbl" style="left:829px;letter-spacing:-0.41px">No. Referencia</div>
<div class="a t lbl" style="left:1042px;letter-spacing:-1.1px">Fecha</div>
<div class="a fy" style="left:555px"></div><div class="a t fv red" style="left:555px;width:126px;text-align:right">12</div>
<div class="a fy" style="left:690px"></div><div class="a t fv red" style="left:690px;width:125px;text-align:right;letter-spacing:-0.25px">5,298.53</div>
<div class="a fref"></div><div class="a t fv" style="left:835px;color:#6d6d6d;letter-spacing:-0.3px">0000000062</div>
<div class="a ffe"></div><div class="a t fv" style="left:976px;letter-spacing:0.35px">30/10/2024</div>
<div class="a" id="btnCarga"></div>
<svg class="a" style="left:1107px;top:664px" width="34" height="34" viewBox="0 0 34 34"><defs><pattern id="chk" width="2" height="2" patternUnits="userSpaceOnUse"><rect width="2" height="2" fill="#e6e67a"/><rect width="1" height="1" fill="#fafad0"/><rect x="1" y="1" width="1" height="1" fill="#fafad0"/></pattern></defs>
<path d="M17.8 3V1.2h6.5V3" fill="#e8e8a0" stroke="#777" stroke-width="0.9"/>
<rect x="17" y="2.6" width="14.4" height="9" fill="url(#chk)" stroke="#6a6a6a" stroke-width="0.9"/>
<path d="M17.5 7.2H30.3L32.1 12.4H19.5z" fill="url(#chk)" stroke="#333" stroke-width="0.8"/>
<path d="M30.3 6.8L32.3 12.6H19.8" fill="none" stroke="#000" stroke-width="1.5"/>
<path d="M4.2 16C4.6 12 7 7.6 10 7C12.5 6.8 14.8 8.3 16.8 9.8L11.3 19.3z" fill="#fff" stroke="#8a8a8a" stroke-width="1"/>
<path d="M4.5 16.2L11.3 19.3L16.8 10" fill="none" stroke="#000" stroke-width="1.2"/>
<path d="M5.4 20.6L11.8 23.1L17.2 14.8L18.6 16.2" fill="#fff" stroke="#000" stroke-width="1.1"/>
<path d="M12.8 24.6L18.4 19L19.6 20.2" fill="none" stroke="#000" stroke-width="1.1"/>
<path d="M2.5 22V20.3h5V22" fill="#e8e8a0" stroke="#777" stroke-width="0.8"/>
<rect x="1.2" y="21.5" width="13.6" height="9.6" fill="url(#chk)" stroke="#555" stroke-width="0.8"/>
<path d="M0.6 25.6H13.2L14.6 31.2H2z" fill="url(#chk)" stroke="#333" stroke-width="0.8"/>
<path d="M13.3 24.5L15 31.3" fill="none" stroke="#000" stroke-width="1.6"/>
<path d="M14.5 24V31.5" fill="none" stroke="#000" stroke-width="1.2"/>
<path d="M3 31.8H14" stroke="#d02020" stroke-width="0.9" stroke-dasharray="0.8 0.8"/>
<path d="M19.2 24.6C22 24.6 24.6 22.5 25.2 18" fill="none" stroke="#e01818" stroke-width="1.3" stroke-dasharray="1.6 0.5"/>
<path d="M22.8 18.6L25.4 15.6L28 18.4z" fill="#e01818"/>
</svg>
<div class="a t" id="cT1"><u>C</u>arga Masiva desde</div><div class="a t" id="cT2">archivo TXT</div>

</body></html>
